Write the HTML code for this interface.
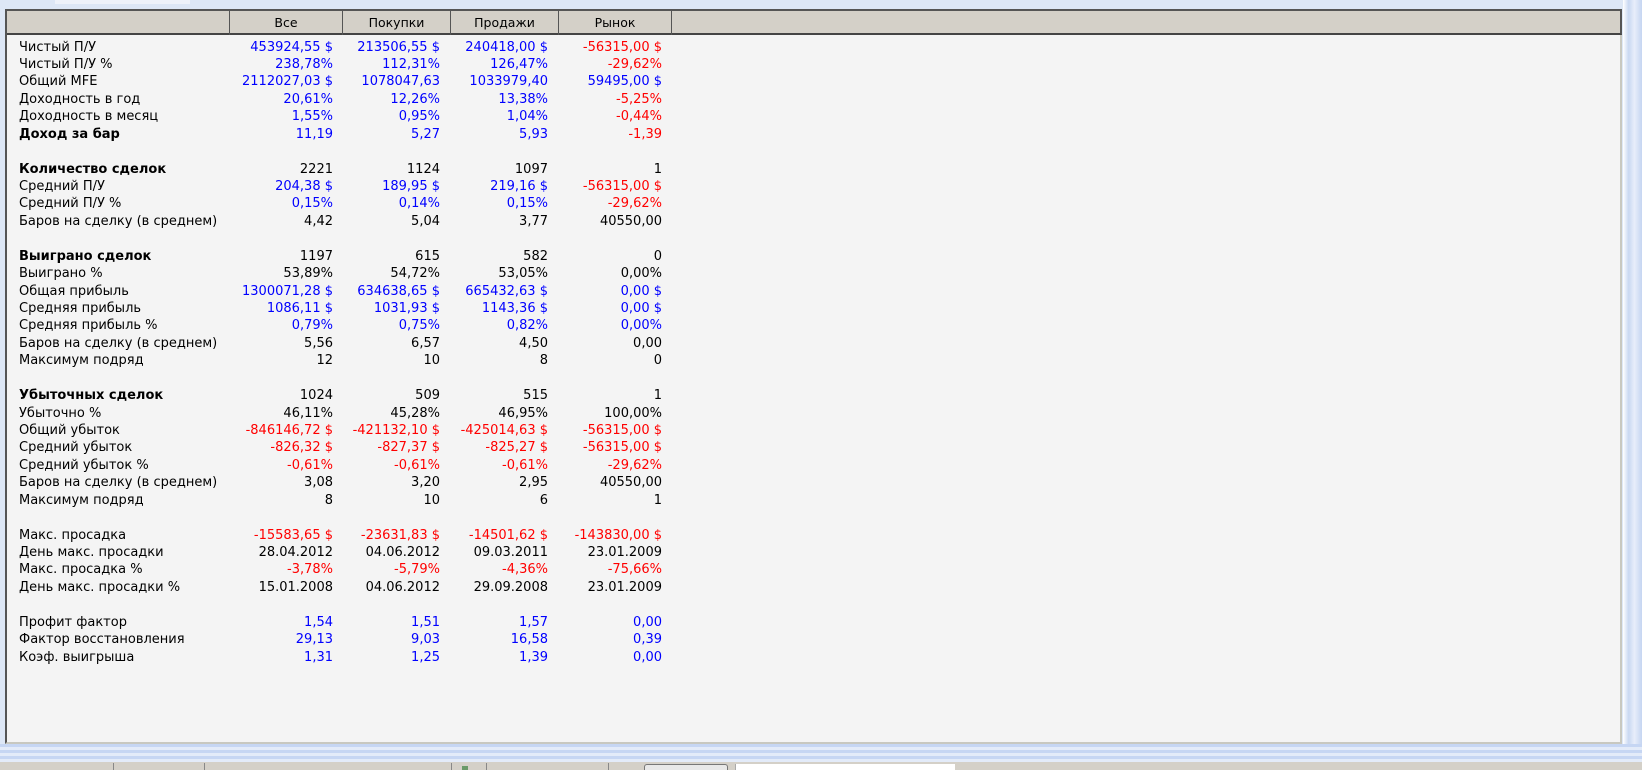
<!DOCTYPE html>
<html><head><meta charset="utf-8"><style>
*{margin:0;padding:0;box-sizing:border-box}
body{width:1642px;height:770px;overflow:hidden;background:#dde7f6;position:relative;font-family:"DejaVu Sans","Liberation Sans",sans-serif;font-size:13px}
.toptab{position:absolute;left:55px;top:0;width:135px;height:4px;background:#eef2fa}
.panel{position:absolute;left:5px;top:9px;width:1617px;height:735px;background:#f4f4f4;border-left:2px solid #555;border-right:2px solid #c8c8c0;border-bottom:2px solid #c8c8c0}
.hdr{position:absolute;left:0;top:0;width:1615px;height:26px;background:#d4d0c8;border:2px solid #555;border-left:none;border-bottom:2px solid #444;font-size:12.5px}
.hc{position:absolute;top:0;height:24px;line-height:24px;text-align:center;border-left:1px solid #555;color:#000}
.row{position:absolute;left:0;height:17.43px;line-height:17.43px;white-space:nowrap;width:700px}
.l{position:absolute;left:14px}
.v{position:absolute;text-align:right;width:120px}
.c1{left:208px}.c2{left:315px}.c3{left:423px}.c4{left:537px}
.b{color:#0000ff}.r{color:#ff0000}
.bold .l{font-weight:bold}
.right{position:absolute;left:1623px;top:0;width:19px;height:770px;background:linear-gradient(90deg,#fff 0,#c9d8f2 30%,#e8eefa 60%,#c5d5f1 100%)}
.band{position:absolute;left:0;top:744px;width:1642px;height:18px;background:repeating-linear-gradient(180deg,#c6d6f3 0 3px,#e3ebf9 3px 6px)}
.bar{position:absolute;left:0;top:762px;width:1642px;height:8px;background:#d4d0c8}
.sep{position:absolute;top:763px;width:1px;height:7px;background:#888}
</style></head><body>
<div class="toptab"></div>
<div class="right"></div>
<div class="band"></div>
<div class="bar"></div>
<div class="sep" style="left:113px"></div><div class="sep" style="left:204px"></div><div class="sep" style="left:451px"></div><div class="sep" style="left:486px"></div><div class="sep" style="left:608px"></div>
<div style="position:absolute;left:462px;top:766px;width:6px;height:4px;background:#6a9a6a"></div>
<div style="position:absolute;left:644px;top:764px;width:84px;height:6px;border:1px solid #777;border-bottom:none;border-radius:3px 3px 0 0;background:#e8e8e8"></div>
<div style="position:absolute;left:735px;top:764px;width:220px;height:6px;background:#fff;border-left:1px solid #aaa"></div>
<div class="panel">
<div class="hdr">
<div class="hc" style="left:222px;width:113px">Все</div>
<div class="hc" style="left:335px;width:108px">Покупки</div>
<div class="hc" style="left:443px;width:108px">Продажи</div>
<div class="hc" style="left:551px;width:113px">Рынок</div>
<div class="hc" style="left:664px;width:1px"></div>
</div>
</div>
<div style="position:absolute;left:5px;top:38.5px">
<div class="row" style="top:0px"><span class="l">Чистый П/У</span><span class="v c1 b">453924,55 $</span><span class="v c2 b">213506,55 $</span><span class="v c3 b">240418,00 $</span><span class="v c4 r">-56315,00 $</span></div>
<div class="row" style="top:17.43px"><span class="l">Чистый П/У %</span><span class="v c1 b">238,78%</span><span class="v c2 b">112,31%</span><span class="v c3 b">126,47%</span><span class="v c4 r">-29,62%</span></div>
<div class="row" style="top:34.86px"><span class="l">Общий MFE</span><span class="v c1 b">2112027,03 $</span><span class="v c2 b">1078047,63</span><span class="v c3 b">1033979,40</span><span class="v c4 b">59495,00 $</span></div>
<div class="row" style="top:52.29px"><span class="l">Доходность в год</span><span class="v c1 b">20,61%</span><span class="v c2 b">12,26%</span><span class="v c3 b">13,38%</span><span class="v c4 r">-5,25%</span></div>
<div class="row" style="top:69.72px"><span class="l">Доходность в месяц</span><span class="v c1 b">1,55%</span><span class="v c2 b">0,95%</span><span class="v c3 b">1,04%</span><span class="v c4 r">-0,44%</span></div>
<div class="row bold" style="top:87.15px"><span class="l">Доход за бар</span><span class="v c1 b">11,19</span><span class="v c2 b">5,27</span><span class="v c3 b">5,93</span><span class="v c4 r">-1,39</span></div>

<div class="row bold" style="top:122.01px"><span class="l">Количество сделок</span><span class="v c1">2221</span><span class="v c2">1124</span><span class="v c3">1097</span><span class="v c4">1</span></div>
<div class="row" style="top:139.44px"><span class="l">Средний П/У</span><span class="v c1 b">204,38 $</span><span class="v c2 b">189,95 $</span><span class="v c3 b">219,16 $</span><span class="v c4 r">-56315,00 $</span></div>
<div class="row" style="top:156.87px"><span class="l">Средний П/У %</span><span class="v c1 b">0,15%</span><span class="v c2 b">0,14%</span><span class="v c3 b">0,15%</span><span class="v c4 r">-29,62%</span></div>
<div class="row" style="top:174.3px"><span class="l">Баров на сделку (в среднем)</span><span class="v c1">4,42</span><span class="v c2">5,04</span><span class="v c3">3,77</span><span class="v c4">40550,00</span></div>

<div class="row bold" style="top:209.16px"><span class="l">Выиграно сделок</span><span class="v c1">1197</span><span class="v c2">615</span><span class="v c3">582</span><span class="v c4">0</span></div>
<div class="row" style="top:226.59px"><span class="l">Выиграно %</span><span class="v c1">53,89%</span><span class="v c2">54,72%</span><span class="v c3">53,05%</span><span class="v c4">0,00%</span></div>
<div class="row" style="top:244.02px"><span class="l">Общая прибыль</span><span class="v c1 b">1300071,28 $</span><span class="v c2 b">634638,65 $</span><span class="v c3 b">665432,63 $</span><span class="v c4 b">0,00 $</span></div>
<div class="row" style="top:261.45px"><span class="l">Средняя прибыль</span><span class="v c1 b">1086,11 $</span><span class="v c2 b">1031,93 $</span><span class="v c3 b">1143,36 $</span><span class="v c4 b">0,00 $</span></div>
<div class="row" style="top:278.88px"><span class="l">Средняя прибыль %</span><span class="v c1 b">0,79%</span><span class="v c2 b">0,75%</span><span class="v c3 b">0,82%</span><span class="v c4 b">0,00%</span></div>
<div class="row" style="top:296.31px"><span class="l">Баров на сделку (в среднем)</span><span class="v c1">5,56</span><span class="v c2">6,57</span><span class="v c3">4,50</span><span class="v c4">0,00</span></div>
<div class="row" style="top:313.74px"><span class="l">Максимум подряд</span><span class="v c1">12</span><span class="v c2">10</span><span class="v c3">8</span><span class="v c4">0</span></div>

<div class="row bold" style="top:348.6px"><span class="l">Убыточных сделок</span><span class="v c1">1024</span><span class="v c2">509</span><span class="v c3">515</span><span class="v c4">1</span></div>
<div class="row" style="top:366.03px"><span class="l">Убыточно %</span><span class="v c1">46,11%</span><span class="v c2">45,28%</span><span class="v c3">46,95%</span><span class="v c4">100,00%</span></div>
<div class="row" style="top:383.46px"><span class="l">Общий убыток</span><span class="v c1 r">-846146,72 $</span><span class="v c2 r">-421132,10 $</span><span class="v c3 r">-425014,63 $</span><span class="v c4 r">-56315,00 $</span></div>
<div class="row" style="top:400.89px"><span class="l">Средний убыток</span><span class="v c1 r">-826,32 $</span><span class="v c2 r">-827,37 $</span><span class="v c3 r">-825,27 $</span><span class="v c4 r">-56315,00 $</span></div>
<div class="row" style="top:418.32px"><span class="l">Средний убыток %</span><span class="v c1 r">-0,61%</span><span class="v c2 r">-0,61%</span><span class="v c3 r">-0,61%</span><span class="v c4 r">-29,62%</span></div>
<div class="row" style="top:435.75px"><span class="l">Баров на сделку (в среднем)</span><span class="v c1">3,08</span><span class="v c2">3,20</span><span class="v c3">2,95</span><span class="v c4">40550,00</span></div>
<div class="row" style="top:453.18px"><span class="l">Максимум подряд</span><span class="v c1">8</span><span class="v c2">10</span><span class="v c3">6</span><span class="v c4">1</span></div>

<div class="row" style="top:488.04px"><span class="l">Макс. просадка</span><span class="v c1 r">-15583,65 $</span><span class="v c2 r">-23631,83 $</span><span class="v c3 r">-14501,62 $</span><span class="v c4 r">-143830,00 $</span></div>
<div class="row" style="top:505.47px"><span class="l">День макс. просадки</span><span class="v c1">28.04.2012</span><span class="v c2">04.06.2012</span><span class="v c3">09.03.2011</span><span class="v c4">23.01.2009</span></div>
<div class="row" style="top:522.9px"><span class="l">Макс. просадка %</span><span class="v c1 r">-3,78%</span><span class="v c2 r">-5,79%</span><span class="v c3 r">-4,36%</span><span class="v c4 r">-75,66%</span></div>
<div class="row" style="top:540.33px"><span class="l">День макс. просадки %</span><span class="v c1">15.01.2008</span><span class="v c2">04.06.2012</span><span class="v c3">29.09.2008</span><span class="v c4">23.01.2009</span></div>

<div class="row" style="top:575.19px"><span class="l">Профит фактор</span><span class="v c1 b">1,54</span><span class="v c2 b">1,51</span><span class="v c3 b">1,57</span><span class="v c4 b">0,00</span></div>
<div class="row" style="top:592.62px"><span class="l">Фактор восстановления</span><span class="v c1 b">29,13</span><span class="v c2 b">9,03</span><span class="v c3 b">16,58</span><span class="v c4 b">0,39</span></div>
<div class="row" style="top:610.05px"><span class="l">Коэф. выигрыша</span><span class="v c1 b">1,31</span><span class="v c2 b">1,25</span><span class="v c3 b">1,39</span><span class="v c4 b">0,00</span></div>
</div>
</body></html>
